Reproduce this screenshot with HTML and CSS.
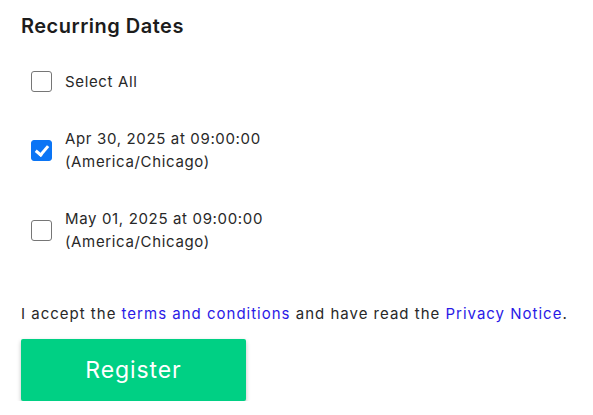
FILE: index.html
```html
<!DOCTYPE html>
<html lang="en">
<head>
<meta charset="utf-8">
<title>Recurring Dates</title>
<link rel="stylesheet" href="styles.css">
</head>
<body>
<main class="page">
  <h2 class="title">Recurring Dates</h2>
  <div class="options">
    <label class="option">
      <input type="checkbox" class="check">
      <span class="label">Select All</span>
    </label>
    <label class="option">
      <input type="checkbox" class="check" checked>
      <span class="label">Apr 30, 2025 at 09:00:00<br>(America/Chicago)</span>
    </label>
    <label class="option">
      <input type="checkbox" class="check">
      <span class="label">May 01, 2025 at 09:00:00<br>(America/Chicago)</span>
    </label>
  </div>
  <p class="terms">I accept the <a href="#" class="link">terms and conditions</a> and have read the <a href="#" class="link">Privacy Notice</a>.</p>
  <button class="register" type="button">Register</button>
</main>
</body>
</html>
```
FILE: styles.css
```css
* { box-sizing: border-box; }
html, body { margin: 0; padding: 0; background: #fff; }
body {
  font-family: Inter, "Open Sans", "Liberation Sans", sans-serif;
  color: #222;
}
.page {
  padding: 14px 21px 0 21px;
  display: flex;
  flex-direction: column;
  align-items: flex-start;
}
.title {
  margin: 0;
  font-size: 20px;
  line-height: 24px;
  font-weight: 600;
  letter-spacing: 0.5px;
  color: #1c1c1c;
}
.options {
  margin-top: 32px;
  display: flex;
  flex-direction: column;
  gap: 34px;
}
.option {
  display: flex;
  align-items: center;
  gap: 13px;
  padding-left: 10px;
  cursor: pointer;
}
.check {
  appearance: none;
  -webkit-appearance: none;
  margin: 0;
  width: 21px;
  height: 21px;
  border: 1.5px solid #767676;
  border-radius: 3px;
  background: #fff;
  flex: none;
  position: relative;
}
.check:checked {
  background: #0b75f5;
  border-color: #0b75f5;
}
.check:checked::after {
  content: "";
  position: absolute;
  left: 6px;
  top: 2px;
  width: 5px;
  height: 10px;
  border: solid #fff;
  border-width: 0 3px 3px 0;
  transform: rotate(40deg);
}
.label {
  font-size: 15px;
  line-height: 23px;
  letter-spacing: 0.65px;
  color: #282828;
}
.terms {
  margin: 49px 0 0 0;
  font-size: 15px;
  line-height: 23px;
  letter-spacing: 1px;
  color: #282828;
}
.link {
  color: #2a1ae6;
  text-decoration: none;
}
.register {
  margin-top: 14px;
  width: 225px;
  height: 62px;
  border: none;
  border-radius: 2px;
  background: #00d084;
  color: #fff;
  font-family: inherit;
  font-size: 23px;
  font-weight: 400;
  letter-spacing: 0.9px;
  box-shadow: 0 2px 4px rgba(0,0,0,0.25);
  cursor: pointer;
}
```
